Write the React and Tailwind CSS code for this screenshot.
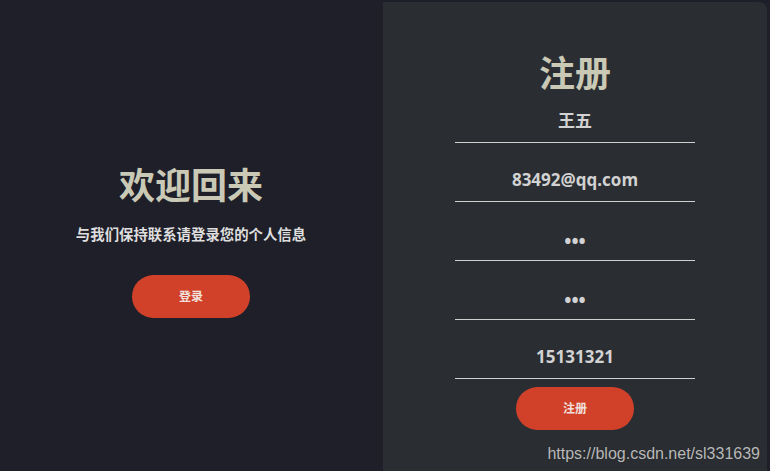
import React from "react";

const font = { fontFamily: '"Open Sans", "Noto Sans CJK SC", sans-serif' };

function Field({ value, first, dots }) {
  return (
    <div
      className={`${first ? "mt-[4px]" : "mt-[16px]"} w-[240px] h-[43px] border-b border-[#d0d0d0] flex items-center justify-center font-bold text-[#d2d2d2]`}
    >
      <span className={dots ? "text-[19px] leading-none pt-[4px]" : "text-[17px]"}>{value}</span>
    </div>
  );
}

export default function App() {
  return (
    <div
      className="w-[770px] h-[471px] bg-[#1f1f29] flex relative overflow-hidden"
      style={font}
    >
      <div className="w-[382px] h-full flex flex-col items-center pt-[164px]">
        <h1 className="text-[36px] leading-[44px] font-bold text-[#c9c9b5]">欢迎回来</h1>
        <p className="mt-[17px] text-[14.4px] font-bold text-[#dedede] leading-[20px]">
          与我们保持联系请登录您的个人信息
        </p>
        <button className="mt-[30px] w-[118px] h-[43px] rounded-full bg-[#d1412a] text-[#f0e0dc] text-[12px] font-bold">
          登录
        </button>
      </div>
      <div className="flex-1 ml-[1px] mt-[2px] mr-[3px] bg-[#2a2e33] rounded-tr-[8px] flex flex-col items-center pt-[50px]">
        <h1 className="text-[36px] leading-[44px] font-bold text-[#c9c9b5]">注册</h1>
        <Field value="王五" first />
        <Field value="83492@qq.com" />
        <Field value="•••" dots />
        <Field value="•••" dots />
        <Field value="15131321" />
        <button className="mt-[8px] w-[118px] h-[43px] rounded-full bg-[#d1412a] text-[#f0e0dc] text-[12px] font-bold">
          注册
        </button>
      </div>
      <div
        className="absolute right-[10px] bottom-[8px] text-[16px] text-[#b9b9b9] leading-[18px]"
        style={{ fontFamily: '"Liberation Sans", Arial, sans-serif', textShadow: "0 0 1px #222" }}
      >
        https://blog.csdn.net/sl331639
      </div>
    </div>
  );
}
